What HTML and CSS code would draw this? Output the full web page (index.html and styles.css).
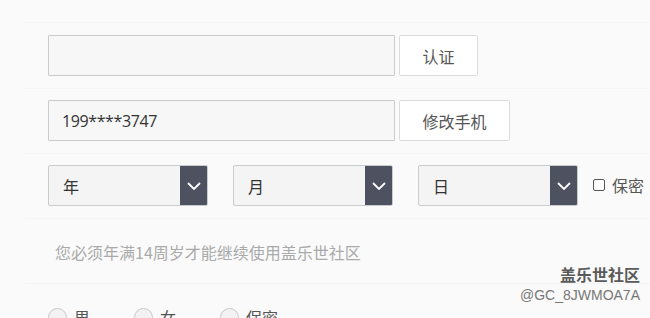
FILE: index.html
```html
<!DOCTYPE html>
<html lang="zh-CN">
<head>
<meta charset="utf-8">
<link rel="stylesheet" href="styles.css">
</head>
<body>
<div class="page">
  <div class="row">
    <div class="field"></div>
    <button class="btn btn-short">认证</button>
  </div>
  <div class="row">
    <div class="field"><span class="value">199****3747</span></div>
    <button class="btn btn-long">修改手机</button>
  </div>
  <div class="row selects">
    <div class="select"><span class="label">年</span><span class="arrow"><svg width="14" height="8" viewBox="0 0 14 8"><path d="M1 1l6 6 6-6" fill="none" stroke="#fff" stroke-width="1.8"/></svg></span></div>
    <div class="select"><span class="label">月</span><span class="arrow"><svg width="14" height="8" viewBox="0 0 14 8"><path d="M1 1l6 6 6-6" fill="none" stroke="#fff" stroke-width="1.8"/></svg></span></div>
    <div class="select"><span class="label">日</span><span class="arrow"><svg width="14" height="8" viewBox="0 0 14 8"><path d="M1 1l6 6 6-6" fill="none" stroke="#fff" stroke-width="1.8"/></svg></span></div>
    <label class="secret"><span class="box"></span>保密</label>
  </div>
  <div class="row note">
    <p class="hint">您必须年满14周岁才能继续使用盖乐世社区</p>
  </div>
  <div class="row radios">
    <span class="radio"><span class="dot"></span>男</span>
    <span class="radio"><span class="dot"></span>女</span>
    <span class="radio"><span class="dot"></span>保密</span>
  </div>
  <div class="watermark">
    <div class="wm-title">盖乐世社区</div>
    <div class="wm-id">@GC_8JWMOA7A</div>
  </div>
</div>
</body>
</html>
```
FILE: styles.css
```css
html, body {
  margin: 0;
  padding: 0;
  background: #fafafa;
}
body {
  font-family: "Noto Sans CJK SC", "Open Sans", sans-serif;
  color: #333;
  width: 650px;
  height: 318px;
  overflow: hidden;
}
.page {
  position: relative;
  padding-top: 22px;
  height: 296px;
  overflow: hidden;
}
.row {
  display: flex;
  align-items: flex-start;
  gap: 4px;
  margin-left: 25px;
  padding-left: 23px;
  padding-top: 12px;
  height: 53px;
  border-top: 1px solid #f4f4f4;
}
.row + .row {
  padding-top: 11px;
  height: 53px;
}
.field {
  box-sizing: border-box;
  width: 347px;
  height: 41px;
  background: #f7f7f7;
  border: 1px solid #c9cccf;
  border-radius: 1px;
  display: flex;
  align-items: center;
  padding-left: 13px;
}
.value {
  font-family: "Open Sans", "Noto Sans CJK SC", sans-serif;
  font-size: 16px;
  color: #333;
  letter-spacing: -0.4px;
}
.btn {
  box-sizing: border-box;
  height: 41px;
  background: #fff;
  border: 1px solid #dcdcdc;
  border-radius: 2px;
  font-family: "Noto Sans CJK SC", sans-serif;
  font-size: 16px;
  color: #555;
  padding: 0;
}
.btn-short { width: 79px; }
.btn-long { width: 111px; }
.selects {
  gap: 25px;
}
.select {
  flex: none;
  box-sizing: border-box;
  width: 160px;
  height: 41px;
  background: #f4f4f4;
  border: 1px solid #c9cccf;
  border-radius: 2px;
  display: flex;
  align-items: center;
  overflow: hidden;
}
.select .label {
  flex: 1;
  padding-left: 14px;
  font-size: 16px;
  color: #333;
}
.select .arrow {
  width: 27px;
  height: 100%;
  background: #4e5160;
  display: flex;
  align-items: center;
  justify-content: center;
}
.secret {
  display: flex;
  align-items: center;
  margin-left: -10px;
  margin-top: 8px;
  font-size: 16px;
  color: #555;
}
.box {
  box-sizing: border-box;
  width: 12px;
  height: 12px;
  border: 1px solid #555;
  border-radius: 2px;
  background: #fff;
  margin-right: 7px;
}
.hint {
  margin: 0 0 0 7px;
  padding-top: 9px;
  font-size: 16px;
  line-height: 26px;
  color: #aaa;
}
.radios {
  gap: 0;
  padding-top: 23px;
}
.row.radios {
  padding-top: 23px;
  height: 12px;
}
.radio {
  display: flex;
  align-items: center;
  font-size: 16px;
  line-height: 20px;
  color: #555;
  width: 86px;
}
.dot {
  box-sizing: border-box;
  width: 19px;
  height: 19px;
  border: 1px solid #c8c8c8;
  border-radius: 50%;
  background: #f2f2f2;
  margin-right: 7px;
}
.watermark {
  position: absolute;
  right: 10px;
  top: 263px;
  text-align: right;
  color: #666;
}
.wm-title {
  font-size: 16px;
  font-weight: bold;
  line-height: 22px;
  color: #5a5a5a;
}
.wm-id {
  font-family: "Liberation Sans", sans-serif;
  font-size: 14px;
  line-height: 20px;
  color: #777;
}
```
